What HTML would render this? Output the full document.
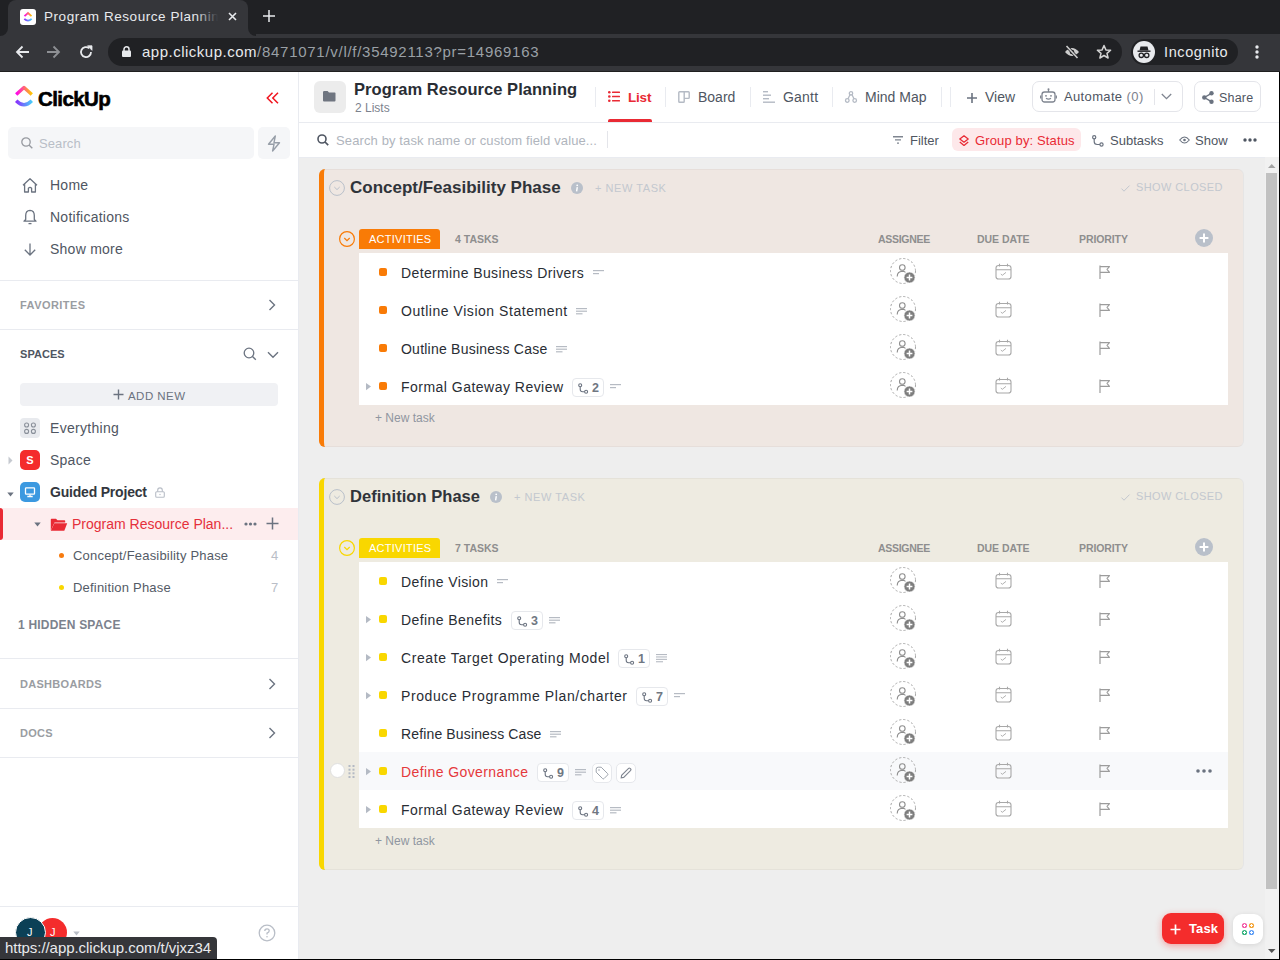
<!DOCTYPE html>
<html><head><meta charset="utf-8">
<style>
*{box-sizing:border-box;margin:0;padding:0}
html,body{width:1280px;height:960px;overflow:hidden;background:#fff;font-family:"Liberation Sans",sans-serif;position:relative}
.a{position:absolute}
.t{position:absolute;white-space:nowrap;line-height:1}
svg{position:absolute;overflow:visible}
/* browser chrome */
#tabbar{left:0;top:0;width:1280px;height:36px;background:#202124}
#tab{left:8px;top:0;width:240px;height:36px;background:#35363a;border-radius:8px 8px 0 0}
#toolbar{left:0;top:36px;width:1280px;height:36px;background:#35363a}
#url{left:108px;top:38px;width:1014px;height:28px;background:#202124;border-radius:14px}
#incog{left:1131px;top:39px;width:107px;height:26px;background:#202124;border-radius:13px}
/* sidebar */
#side{left:0;top:72px;width:299px;height:888px;background:#fff;border-right:1px solid #e9ebf0}
.hr{position:absolute;left:0;width:298px;height:1px;background:#e9ebf0}
.ni{font-size:14px;color:#4f5662;line-height:14px;letter-spacing:0.25px}
.sh{font-size:11px;font-weight:bold;line-height:11px}
.li{font-size:13px;color:#545b66;line-height:13px;letter-spacing:0.2px}
.sep{position:absolute;top:87px;width:1px;height:20px;background:#e9ebf0}
.tb{font-size:14px;color:#4f5662;line-height:14px;margin-top:-1px}
.tl{font-size:13px;color:#4f5662;line-height:13px}
.tn{font-size:14px;line-height:14px}
.colh{font-size:10.5px;font-weight:bold;color:#8e8e8e;line-height:11px}
/* main */
#main{left:299px;top:72px;width:981px;height:888px;background:#eeeeee}
</style></head><body>
<!-- Browser chrome -->
<div class="a" style="left:0;top:0;width:1280px;height:72px;background:#35363a"></div>
<div class="a" style="left:0;top:0;width:1280px;height:34px;background:#202124"></div>
<div class="a" style="left:8px;top:0;width:240px;height:36px;background:#35363a;border-radius:8px 8px 0 0"></div>
<div class="a" style="left:0;top:26px;width:8px;height:10px;background:#35363a"></div>
<div class="a" style="left:0;top:26px;width:8px;height:10px;background:#202124;border-bottom-right-radius:8px"></div>
<div class="a" style="left:248px;top:26px;width:8px;height:10px;background:#35363a"></div>
<div class="a" style="left:248px;top:26px;width:8px;height:10px;background:#202124;border-bottom-left-radius:8px"></div>
<div class="a" style="left:0;top:71px;width:1280px;height:1px;background:#1f1f1f"></div>
<!-- favicon -->
<div class="a" style="left:20px;top:9px;width:16px;height:16px;background:#fff;border-radius:3px"></div>
<svg style="left:20px;top:9px" width="16" height="16" viewBox="0 0 16 16"><defs><linearGradient id="fg1" x1="0" x2="1"><stop offset="0" stop-color="#ff02f0"/><stop offset="1" stop-color="#ffc800"/></linearGradient><linearGradient id="fg2" x1="0" x2="1"><stop offset="0" stop-color="#8930fd"/><stop offset="1" stop-color="#49ccf9"/></linearGradient></defs><path d="M4.5 7.2 L8 4 L11.5 7.2" fill="none" stroke="url(#fg1)" stroke-width="1.8"/><path d="M4.3 9.8 Q8 13.4 11.7 9.8" fill="none" stroke="url(#fg2)" stroke-width="1.8"/></svg>
<div class="t" style="left:44px;top:9px;font-size:13.5px;color:#e8eaed;line-height:16px;letter-spacing:0.55px">Program Resource Planning</div>
<div class="a" style="left:196px;top:4px;width:26px;height:26px;background:linear-gradient(90deg,rgba(53,54,58,0),#35363a 85%)"></div>
<div class="a" style="left:222px;top:4px;width:24px;height:26px;background:#35363a"></div>
<svg style="left:228px;top:12px" width="9" height="9" viewBox="0 0 9 9"><path d="M1 1L8 8M8 1L1 8" stroke="#e8eaed" stroke-width="1.6"/></svg>
<svg style="left:262px;top:9px" width="14" height="14" viewBox="0 0 14 14"><path d="M7 1V13M1 7H13" stroke="#e8eaed" stroke-width="1.5"/></svg>
<!-- nav -->
<svg style="left:15px;top:45px" width="14" height="14" viewBox="0 0 14 14"><path d="M14 7H2M7.5 1.5L2 7L7.5 12.5" fill="none" stroke="#e8eaed" stroke-width="1.8"/></svg>
<svg style="left:47px;top:45px" width="14" height="14" viewBox="0 0 14 14"><path d="M0 7H12M6.5 1.5L12 7L6.5 12.5" fill="none" stroke="#8e9094" stroke-width="1.8"/></svg>
<svg style="left:79px;top:45px" width="14" height="14" viewBox="0 0 14 14"><path d="M12 7A5 5 0 1 1 10.3 3.3" fill="none" stroke="#e8eaed" stroke-width="1.8"/><path d="M8.5 0.8H13V5.3Z" fill="#e8eaed" stroke="#e8eaed" stroke-width="0.8"/></svg>
<div class="a" style="left:108px;top:38px;width:1014px;height:28px;background:#202124;border-radius:14px"></div>
<svg style="left:122px;top:46px" width="9" height="11" viewBox="0 0 9 11"><rect x="0" y="4.5" width="9" height="6.5" rx="1" fill="#e8eaed"/><path d="M2 5V3.3A2.5 2.5 0 0 1 7 3.3V5" fill="none" stroke="#e8eaed" stroke-width="1.5"/></svg>
<div class="t" style="left:142px;top:44px;font-size:15px;color:#e8eaed;line-height:16px;letter-spacing:0.5px">app.clickup.com<span style="color:#9aa0a6;letter-spacing:0.72px">/8471071/v/l/f/35492113?pr=14969163</span></div>
<svg style="left:1064px;top:45px" width="16" height="14" viewBox="0 0 16 14"><path d="M1 7Q8 -1 15 7Q8 15 1 7Z" fill="#cdcdcd"/><circle cx="8" cy="7" r="2.3" fill="#202124"/><path d="M2.5 1L13.5 13" stroke="#202124" stroke-width="3"/><path d="M2.5 1L13.5 13" stroke="#cdcdcd" stroke-width="1.6"/></svg>
<svg style="left:1096px;top:44px" width="16" height="16" viewBox="0 0 16 16"><path d="M8 1.5L9.9 5.9L14.6 6.3L11 9.4L12.1 14L8 11.5L3.9 14L5 9.4L1.4 6.3L6.1 5.9Z" fill="none" stroke="#d4d4d4" stroke-width="1.5" stroke-linejoin="round"/></svg>
<div class="a" style="left:1131px;top:39px;width:107px;height:26px;background:#202124;border-radius:13px"></div>
<div class="a" style="left:1133px;top:41px;width:22px;height:22px;background:#e8eaed;border-radius:50%"></div>
<svg style="left:1133px;top:41px" width="22" height="22" viewBox="0 0 22 22"><path d="M7.5 5.5H14.5L15.5 9.5H6.5Z" fill="#202124"/><rect x="4.5" y="9.5" width="13" height="1.4" fill="#202124"/><circle cx="8.3" cy="14.3" r="2.2" fill="none" stroke="#202124" stroke-width="1.3"/><circle cx="13.7" cy="14.3" r="2.2" fill="none" stroke="#202124" stroke-width="1.3"/><path d="M10.4 14H11.6" stroke="#202124" stroke-width="1.2"/></svg>
<div class="t" style="left:1164px;top:44px;font-size:14.5px;color:#e8eaed;line-height:16px;letter-spacing:0.6px">Incognito</div>
<svg style="left:1255px;top:45px" width="4" height="14" viewBox="0 0 4 14"><circle cx="2" cy="2" r="1.7" fill="#e8eaed"/><circle cx="2" cy="7" r="1.7" fill="#e8eaed"/><circle cx="2" cy="12" r="1.7" fill="#e8eaed"/></svg>

<!-- Sidebar -->
<div class="a" style="left:0;top:72px;width:298px;height:888px;background:#fff"></div>
<div class="a" style="left:298px;top:72px;width:1px;height:888px;background:#e9ebf0"></div>
<!-- logo -->
<svg style="left:15px;top:86px" width="18" height="22" viewBox="0 0 18 22"><defs><linearGradient id="lg1" x1="0" x2="1" y1="0" y2="0"><stop offset="0" stop-color="#ff02f0"/><stop offset="1" stop-color="#ffc800"/></linearGradient><linearGradient id="lg2" x1="0" x2="1"><stop offset="0" stop-color="#8930fd"/><stop offset="1" stop-color="#49ccf9"/></linearGradient></defs><path d="M1.2 8.6L9 1.6L16.8 8.6" fill="none" stroke="url(#lg1)" stroke-width="3.4" stroke-linejoin="round"/><path d="M1.2 14.8Q9 22.6 16.8 14.8" fill="none" stroke="url(#lg2)" stroke-width="3.4"/></svg>
<div class="t" style="left:38px;top:88px;font-size:20.5px;font-weight:bold;color:#000;letter-spacing:-0.6px;line-height:22px;-webkit-text-stroke:0.6px #000">ClickUp</div>
<svg style="left:266px;top:92px" width="13" height="12" viewBox="0 0 13 12"><path d="M6.5 0.8L1.3 6L6.5 11.2M12 0.8L6.8 6L12 11.2" fill="none" stroke="#f0141e" stroke-width="1.5"/></svg>
<!-- search -->
<div class="a" style="left:8px;top:127px;width:246px;height:32px;background:#f5f6f8;border-radius:5px"></div>
<svg style="left:21px;top:137px" width="12" height="12" viewBox="0 0 12 12"><circle cx="5" cy="5" r="4.2" fill="none" stroke="#979aa0" stroke-width="1.3"/><path d="M8 8L11.3 11.3" stroke="#979aa0" stroke-width="1.4"/></svg>
<div class="t" style="left:39px;top:137px;font-size:13px;color:#b9bec7;line-height:13px;letter-spacing:0.1px">Search</div>
<div class="a" style="left:258px;top:127px;width:32px;height:32px;background:#f5f6f8;border-radius:5px"></div>
<svg style="left:267px;top:135px" width="14" height="17" viewBox="0 0 14 17"><path d="M8.3 1L1.5 9.3H7L5.6 16L12.5 7.7H7Z" fill="none" stroke="#979ea8" stroke-width="1.4" stroke-linejoin="round"/></svg>
<!-- nav -->
<svg style="left:22px;top:178px" width="16" height="15" viewBox="0 0 16 15"><path d="M1 7.3L8 0.8L15 7.3M2.6 5.8V14H6.4V10.2Q8 8.6 9.6 10.2V14H13.4V5.8" fill="none" stroke="#6b7380" stroke-width="1.3" stroke-linejoin="round"/></svg>
<div class="t ni" style="left:50px;top:178px">Home</div>
<svg style="left:23px;top:209px" width="14" height="16" viewBox="0 0 14 16"><path d="M7 1.3Q11.3 1.5 11.3 6.5V10.5L13 12.2H1L2.7 10.5V6.5Q2.7 1.5 7 1.3Z" fill="none" stroke="#6b7380" stroke-width="1.3" stroke-linejoin="round"/><path d="M5.5 14.6H8.5" stroke="#6b7380" stroke-width="1.3"/></svg>
<div class="t ni" style="left:50px;top:210px">Notifications</div>
<svg style="left:24px;top:243px" width="12" height="13" viewBox="0 0 12 13"><path d="M6 0.5V12M0.8 6.8L6 12L11.2 6.8" fill="none" stroke="#6b7380" stroke-width="1.3"/></svg>
<div class="t ni" style="left:50px;top:242px">Show more</div>
<div class="hr" style="top:280px"></div>
<div class="t sh" style="left:20px;top:300px;color:#9a9da2;letter-spacing:0.45px">FAVORITES</div>
<svg style="left:268px;top:299px" width="8" height="12" viewBox="0 0 8 12"><path d="M1.5 1L6.5 6L1.5 11" fill="none" stroke="#6b7380" stroke-width="1.4"/></svg>
<div class="hr" style="top:329px"></div>
<div class="t sh" style="left:20px;top:349px;color:#4f5662;letter-spacing:0.05px">SPACES</div>
<svg style="left:243px;top:347px" width="14" height="14" viewBox="0 0 14 14"><circle cx="6" cy="6" r="4.8" fill="none" stroke="#6b7380" stroke-width="1.3"/><path d="M9.5 9.5L12.8 12.8" stroke="#6b7380" stroke-width="1.4"/></svg>
<svg style="left:267px;top:351px" width="12" height="8" viewBox="0 0 12 8"><path d="M1 1.3L6 6.3L11 1.3" fill="none" stroke="#6b7380" stroke-width="1.4"/></svg>
<div class="a" style="left:20px;top:383px;width:258px;height:23px;background:#f0f1f4;border-radius:4px"></div>
<svg style="left:113px;top:389px" width="11" height="11" viewBox="0 0 11 11"><path d="M5.5 0.5V10.5M0.5 5.5H10.5" stroke="#6b7380" stroke-width="1.4"/></svg>
<div class="t" style="left:128px;top:390px;font-size:11.5px;color:#6b7380;line-height:12px;letter-spacing:0.45px">ADD NEW</div>
<!-- everything -->
<div class="a" style="left:20px;top:418px;width:20px;height:20px;background:#e8eaee;border-radius:4px"></div>
<svg style="left:20px;top:418px" width="20" height="20" viewBox="0 0 20 20"><g fill="none" stroke="#8a909a" stroke-width="1.1"><circle cx="6.6" cy="7" r="2"/><circle cx="13.4" cy="7" r="2"/><circle cx="6.6" cy="13.4" r="2"/><circle cx="13.4" cy="13.4" r="2"/></g></svg>
<div class="t ni" style="left:50px;top:421px;letter-spacing:0.3px">Everything</div>
<!-- space -->
<svg style="left:8px;top:456px" width="5" height="9" viewBox="0 0 5 9"><path d="M0.5 0.5L4.5 4.5L0.5 8.5Z" fill="#c5c9d0"/></svg>
<div class="a" style="left:20px;top:450px;width:20px;height:20px;background:#f42c2c;border-radius:5px"></div>
<div class="t" style="left:20px;top:455px;width:20px;text-align:center;font-size:11px;font-weight:bold;color:#fff;line-height:11px">S</div>
<div class="t ni" style="left:50px;top:453px">Space</div>
<!-- guided project -->
<svg style="left:7px;top:492px" width="7" height="5" viewBox="0 0 7 5"><path d="M0.3 0.5H6.7L3.5 4.5Z" fill="#6b7380"/></svg>
<div class="a" style="left:20px;top:482px;width:20px;height:20px;background:#3c99e0;border-radius:5px"></div>
<svg style="left:20px;top:482px" width="20" height="20" viewBox="0 0 20 20"><rect x="5.5" y="5.8" width="9" height="6.4" rx="0.6" fill="none" stroke="#fff" stroke-width="1.3"/><path d="M10 12.4V14.2M7.3 14.5H12.7" stroke="#fff" stroke-width="1.3"/></svg>
<div class="t" style="left:50px;top:485px;font-size:14px;font-weight:bold;color:#33373e;line-height:14px;letter-spacing:-0.2px">Guided Project</div>
<svg style="left:155px;top:487px" width="10" height="11" viewBox="0 0 10 11"><rect x="0.7" y="4.7" width="8.6" height="5.6" rx="1" fill="none" stroke="#b9bec7" stroke-width="1.1"/><path d="M2.7 4.7V3.2A2.3 2.3 0 0 1 7.3 3.2V4.7" fill="none" stroke="#b9bec7" stroke-width="1.1"/><circle cx="5" cy="7.5" r="0.7" fill="#b9bec7"/></svg>
<!-- program resource planning row -->
<div class="a" style="left:0;top:508px;width:298px;height:32px;background:#fdedee"></div>
<div class="a" style="left:-3px;top:508px;width:6px;height:32px;background:#e92a34;border-radius:3px"></div>
<svg style="left:34px;top:522px" width="7" height="5" viewBox="0 0 7 5"><path d="M0.3 0.5H6.7L3.5 4.5Z" fill="#6b7380"/></svg>
<svg style="left:50px;top:518px" width="18" height="14" viewBox="0 0 18 14"><path d="M0.8 1.5Q0.8 0.8 1.5 0.8H6L7.5 2.3H14.5Q15.2 2.3 15.2 3V4.5H4.5L0.8 12.5Z" fill="#e92a34"/><path d="M4.3 5.3H17.2L14.3 12.8H0.8Z" fill="#e92a34"/></svg>
<div class="t" style="left:72px;top:517px;font-size:14px;color:#e5303b;line-height:14px">Program Resource Plan...</div>
<svg style="left:244px;top:522px" width="13" height="4" viewBox="0 0 13 4"><circle cx="2" cy="2" r="1.6" fill="#6b7380"/><circle cx="6.5" cy="2" r="1.6" fill="#6b7380"/><circle cx="11" cy="2" r="1.6" fill="#6b7380"/></svg>
<svg style="left:266px;top:517px" width="13" height="13" viewBox="0 0 13 13"><path d="M6.5 0.5V12.5M0.5 6.5H12.5" stroke="#6b7380" stroke-width="1.5"/></svg>
<!-- lists -->
<div class="a" style="left:59px;top:553px;width:5px;height:5px;background:#f77b0f;border-radius:50%"></div>
<div class="t li" style="left:73px;top:549px">Concept/Feasibility Phase</div>
<div class="t li" style="left:271px;top:549px;color:#b9bec7">4</div>
<div class="a" style="left:59px;top:585px;width:5px;height:5px;background:#f9d700;border-radius:50%"></div>
<div class="t li" style="left:73px;top:581px">Definition Phase</div>
<div class="t li" style="left:271px;top:581px;color:#b9bec7">7</div>
<div class="t" style="left:18px;top:619px;font-size:12px;font-weight:bold;color:#7c828d;line-height:12px;letter-spacing:0.2px">1 HIDDEN SPACE</div>
<div class="hr" style="top:658px"></div>
<div class="t sh" style="left:20px;top:679px;color:#9a9da2;letter-spacing:0.3px">DASHBOARDS</div>
<svg style="left:268px;top:678px" width="8" height="12" viewBox="0 0 8 12"><path d="M1.5 1L6.5 6L1.5 11" fill="none" stroke="#6b7380" stroke-width="1.4"/></svg>
<div class="hr" style="top:708px"></div>
<div class="t sh" style="left:20px;top:728px;color:#9a9da2;letter-spacing:0.3px">DOCS</div>
<svg style="left:268px;top:727px" width="8" height="12" viewBox="0 0 8 12"><path d="M1.5 1L6.5 6L1.5 11" fill="none" stroke="#6b7380" stroke-width="1.4"/></svg>
<div class="hr" style="top:757px"></div>
<div class="hr" style="top:906px"></div>
<!-- footer -->
<div class="a" style="left:38px;top:918px;width:29px;height:29px;background:#f42c2c;border-radius:50%"></div>
<div class="t" style="left:50px;top:927px;font-size:11px;color:#fff;line-height:11px">J</div>
<div class="a" style="left:15px;top:917px;width:31px;height:31px;background:#0b4056;border-radius:50%;border:1.5px solid #fff"></div>
<div class="t" style="left:27px;top:927px;font-size:11px;color:#fff;line-height:11px">J</div>
<svg style="left:73px;top:931px" width="7" height="5" viewBox="0 0 7 5"><path d="M0.3 0.5H6.7L3.5 4.5Z" fill="#b9bec7"/></svg>
<svg style="left:258px;top:924px" width="18" height="18" viewBox="0 0 18 18"><circle cx="9" cy="9" r="7.8" fill="none" stroke="#b9bec7" stroke-width="1.3"/><path d="M6.8 7Q6.8 4.8 9 4.8Q11.2 4.8 11.2 6.8Q11.2 8.2 9 9.2V10.6" fill="none" stroke="#b9bec7" stroke-width="1.3"/><circle cx="9" cy="12.8" r="0.8" fill="#b9bec7"/></svg>
<!-- status tooltip -->
<div class="a" style="left:0;top:937px;width:217px;height:23px;background:#35363a;border-top-right-radius:4px"></div>
<div class="t" style="left:5px;top:940px;font-size:15px;color:#e8eaed;line-height:16px;letter-spacing:-0.05px">https://app.clickup.com/t/vjxz34</div>

<!-- Main -->
<div class="a" style="left:299px;top:72px;width:981px;height:888px;background:#eeeeee"></div>
<div class="a" style="left:299px;top:72px;width:980px;height:85px;background:#fff"></div>
<div class="a" style="left:299px;top:122px;width:980px;height:1px;background:#e9ebf0"></div>
<div class="a" style="left:299px;top:157px;width:980px;height:1px;background:#e9ebf0"></div>
<!-- header -->
<div class="a" style="left:314px;top:81px;width:32px;height:32px;background:#ececec;border-radius:6px"></div>
<svg style="left:323px;top:91px" width="13" height="11" viewBox="0 0 13 11"><path d="M0 1.2Q0 0 1.2 0H4.6L6 1.4H11.8Q12.5 1.4 12.5 2.2V9.6Q12.5 10.5 11.6 10.5H1Q0 10.5 0 9.5Z" fill="#6f7580"/></svg>
<div class="t" style="left:354px;top:81px;font-size:16.5px;font-weight:bold;color:#292d34;line-height:17px;letter-spacing:0.05px">Program Resource Planning</div>
<div class="t" style="left:355px;top:102px;font-size:12px;color:#7c828d;line-height:12px">2 Lists</div>
<div class="a sep" style="left:595px"></div>
<svg style="left:608px;top:91px" width="12" height="11" viewBox="0 0 12 11"><g fill="#e92a34"><circle cx="1.3" cy="1.3" r="1.3"/><circle cx="1.3" cy="5.5" r="1.3"/><circle cx="1.3" cy="9.7" r="1.3"/><rect x="4" y="0.6" width="8" height="1.4" rx="0.5"/><rect x="4" y="4.8" width="8" height="1.4" rx="0.5"/><rect x="4" y="9" width="8" height="1.4" rx="0.5"/></g></svg>
<div class="t" style="left:628px;top:91px;font-size:13.5px;font-weight:bold;color:#e92a34;line-height:13px;letter-spacing:-0.2px">List</div>
<div class="a" style="left:608px;top:119px;width:44px;height:3px;background:#e92a34;border-radius:2px 2px 0 0"></div>
<div class="a sep" style="left:665px"></div>
<svg style="left:678px;top:91px" width="12" height="12" viewBox="0 0 12 12"><path d="M1.6 0.8H10.4Q11.2 0.8 11.2 1.6V6.6Q11.2 7.4 10.4 7.4H6.2V10.4Q6.2 11.2 5.4 11.2H1.6Q0.8 11.2 0.8 10.4V1.6Q0.8 0.8 1.6 0.8ZM6.2 0.8V7.4" fill="none" stroke="#b4bac4" stroke-width="1.4"/></svg>
<div class="t tb" style="left:698px;top:91px">Board</div>
<div class="a sep" style="left:750px"></div>
<svg style="left:763px;top:91px" width="12" height="12" viewBox="0 0 12 12"><g fill="#b4bac4"><rect x="0" y="0" width="5" height="1.4"/><rect x="0" y="3.5" width="8" height="1.4"/><rect x="0" y="7" width="6" height="1.4"/><rect x="0" y="10.5" width="12" height="1.4"/></g></svg>
<div class="t tb" style="left:783px;top:91px;letter-spacing:0.2px">Gantt</div>
<div class="a sep" style="left:832px"></div>
<svg style="left:845px;top:91px" width="12" height="12" viewBox="0 0 12 12"><g fill="none" stroke="#b4bac4" stroke-width="1.3"><circle cx="6" cy="2.3" r="1.7"/><circle cx="2.3" cy="9.5" r="1.8"/><circle cx="9.7" cy="9.5" r="1.8"/><path d="M5 3.8L3 7.8M7 3.8L9 7.8"/></g></svg>
<div class="t tb" style="left:865px;top:91px">Mind Map</div>
<div class="a sep" style="left:941px"></div>
<div class="a sep" style="left:950px"></div>
<svg style="left:967px;top:93px" width="10" height="10" viewBox="0 0 10 10"><path d="M5 0V10M0 5H10" stroke="#6b7380" stroke-width="1.6"/></svg>
<div class="t tb" style="left:985px;top:91px">View</div>
<!-- automate -->
<div class="a" style="left:1032px;top:81px;width:151px;height:31px;border:1px solid #e4e5ea;border-radius:7px"></div>
<svg style="left:1040px;top:88px" width="17" height="15" viewBox="0 0 17 15"><g fill="none" stroke="#7f8590" stroke-width="1.3"><rect x="2" y="4" width="13" height="10" rx="2.5"/><path d="M8.5 4V1.8M0.7 7.5V10.5M16.3 7.5V10.5"/><path d="M6 10.3Q8.5 12 11 10.3"/></g><circle cx="8.5" cy="1.3" r="1" fill="#7f8590"/><circle cx="6" cy="7.8" r="0.9" fill="#7f8590"/><circle cx="11" cy="7.8" r="0.9" fill="#7f8590"/></svg>
<div class="t" style="left:1064px;top:90px;font-size:13px;color:#4f5662;line-height:13px;letter-spacing:0.35px">Automate <span style="color:#7c828d;letter-spacing:0.5px">(0)</span></div>
<div class="a" style="left:1154px;top:89px;width:1px;height:16px;background:#e4e5ea"></div>
<svg style="left:1161px;top:93px" width="11" height="7" viewBox="0 0 11 7"><path d="M0.8 1L5.5 5.7L10.2 1" fill="none" stroke="#7f8590" stroke-width="1.3"/></svg>
<div class="a" style="left:1194px;top:81px;width:67px;height:31px;border:1px solid #e4e5ea;border-radius:7px"></div>
<svg style="left:1202px;top:91px" width="12" height="13" viewBox="0 0 12 13"><g fill="#6b7380"><circle cx="9.5" cy="2.3" r="2.2"/><circle cx="2.3" cy="6.5" r="2.2"/><circle cx="9.5" cy="10.7" r="2.2"/></g><path d="M9.5 2.3L2.3 6.5L9.5 10.7" fill="none" stroke="#6b7380" stroke-width="1.4"/></svg>
<div class="t" style="left:1219px;top:92px;font-size:12.5px;color:#4f5662;line-height:13px;letter-spacing:0.2px">Share</div>
<!-- toolbar -->
<svg style="left:317px;top:134px" width="12" height="12" viewBox="0 0 12 12"><circle cx="5" cy="5" r="4" fill="none" stroke="#4f5662" stroke-width="1.6"/><path d="M8 8L11.2 11.2" stroke="#4f5662" stroke-width="1.7"/></svg>
<div class="t" style="left:336px;top:134px;font-size:13px;color:#b0b5bd;line-height:13px;letter-spacing:0.12px">Search by task name or custom field value...</div>
<div class="a" style="left:607px;top:131px;width:1px;height:17px;background:#e4e5ea"></div>
<svg style="left:893px;top:136px" width="10" height="8" viewBox="0 0 10 8"><path d="M0 0.7H10M2 3.9H8M4 7.1H6" stroke="#7f8590" stroke-width="1.4"/></svg>
<div class="t tl" style="left:910px;top:134px">Filter</div>
<div class="a" style="left:952px;top:128px;width:129px;height:23px;background:#fde8ea;border-radius:6px"></div>
<svg style="left:959px;top:135px" width="10" height="12" viewBox="0 0 10 12"><g fill="none" stroke="#e92a34" stroke-width="1.3" stroke-linejoin="round"><path d="M5 0.8L9.2 4L5 7.2L0.8 4Z"/><path d="M0.8 7L5 10.4L9.2 7"/></g></svg>
<div class="t tl" style="left:975px;top:134px;color:#e92a34;letter-spacing:0.13px">Group by: Status</div>
<svg style="left:1092px;top:135px" width="12" height="12" viewBox="0 0 12 12"><g fill="none" stroke="#6b7380" stroke-width="1.2"><circle cx="2.2" cy="2.2" r="1.6"/><circle cx="9.5" cy="9.5" r="1.6"/><path d="M2.2 3.8V6.5Q2.2 9.5 5.2 9.5H7.9"/></g></svg>
<div class="t tl" style="left:1110px;top:134px">Subtasks</div>
<svg style="left:1179px;top:136px" width="11" height="8" viewBox="0 0 11 8"><path d="M0.7 4Q5.5 -2 10.3 4Q5.5 10 0.7 4Z" fill="none" stroke="#6b7380" stroke-width="1.1"/><circle cx="5.5" cy="4" r="1.3" fill="#6b7380"/></svg>
<div class="t tl" style="left:1195px;top:134px">Show</div>
<svg style="left:1243px;top:138px" width="14" height="4" viewBox="0 0 14 4"><circle cx="2" cy="2" r="1.7" fill="#4f5662"/><circle cx="7" cy="2" r="1.7" fill="#4f5662"/><circle cx="12" cy="2" r="1.7" fill="#4f5662"/></svg>
<!-- scrollbar -->
<div class="a" style="left:1265px;top:157px;width:14px;height:803px;background:#f1f1f1"></div>
<svg style="left:1267px;top:163px" width="10" height="6" viewBox="0 0 10 6"><path d="M1 5H8.5L4.75 1Z" fill="#a3a3a3"/></svg>
<div class="a" style="left:1266px;top:173px;width:11px;height:716px;background:#c1c1c1"></div>
<svg style="left:1267px;top:948px" width="10" height="6" viewBox="0 0 10 6"><path d="M1 1H8.5L4.75 5Z" fill="#505050"/></svg>

<!-- CONTENT -->
<div class="a" style="left:319px;top:169px;width:924px;height:278px;background:#efe7e2;border-radius:6px;border-left:5px solid #f97b06"></div>
<div class="a" style="left:322px;top:169px;width:922px;height:278px;border:1px solid rgba(0,0,0,0.035);border-left:none;border-radius:0 6px 6px 0"></div>
<svg style="left:329px;top:180px" width="16" height="16" viewBox="0 0 16 16"><circle cx="8" cy="8" r="7.4" fill="none" stroke="#b9c0ca" stroke-width="1.0"/><path d="M5.3 7L8 9.6L10.7 7" fill="none" stroke="#b9c0ca" stroke-width="1.0"/></svg>
<div class="t" style="left:350px;top:179px;font-size:17px;font-weight:bold;color:#30343a;line-height:17px;letter-spacing:0px">Concept/Feasibility Phase</div>
<svg style="left:571px;top:182px" width="12" height="12" viewBox="0 0 12 12"><circle cx="6" cy="6" r="6" fill="#b9c0ca"/><circle cx="6.2" cy="3.3" r="0.9" fill="#fff"/><path d="M6.3 5.2L5.6 9.3" stroke="#fff" stroke-width="1.4"/></svg>
<div class="t" style="left:595px;top:183px;font-size:11px;color:#c3c8cf;line-height:11px;letter-spacing:0.55px">+ NEW TASK</div>
<svg style="left:1121px;top:185px" width="9" height="7" viewBox="0 0 9 7"><path d="M0.5 3.6L3 6.2L8.5 0.6" fill="none" stroke="#c3c8cf" stroke-width="1"/></svg>
<div class="t" style="left:1136px;top:182px;font-size:11px;color:#c3c8cf;line-height:11px;letter-spacing:0.4px">SHOW CLOSED</div>
<svg style="left:339px;top:231px" width="16" height="16" viewBox="0 0 16 16"><circle cx="8" cy="8" r="7.4" fill="none" stroke="#f97b06" stroke-width="1.2"/><path d="M5.3 7L8 9.6L10.7 7" fill="none" stroke="#f97b06" stroke-width="1.2"/></svg>
<div class="a" style="left:359px;top:229px;width:81px;height:20px;background:#f97b06;border-radius:3px 3px 0 0"></div>
<div class="t" style="left:369px;top:234px;font-size:11px;color:#fff;line-height:11px;letter-spacing:0.25px">ACTIVITIES</div>
<div class="t colh" style="left:455px;top:234px">4 TASKS</div>
<div class="t colh" style="left:878px;top:234px;letter-spacing:-0.3px">ASSIGNEE</div>
<div class="t colh" style="left:977px;top:234px;letter-spacing:-0.05px">DUE DATE</div>
<div class="t colh" style="left:1079px;top:234px;letter-spacing:-0.1px">PRIORITY</div>
<svg style="left:1195px;top:229px" width="18" height="18" viewBox="0 0 18 18"><circle cx="9" cy="9" r="9" fill="#b9c0ca"/><path d="M9 4.6V13.4M4.6 9H13.4" stroke="#fff" stroke-width="2"/></svg>
<div class="a" style="left:359px;top:253px;width:869px;height:152px;background:#fff"></div>
<div class="a" style="left:379px;top:268px;width:8px;height:8px;background:#f97b06;border-radius:2px"></div>
<div class="t tn" style="left:401px;top:266px;letter-spacing:0.37px;color:#292d34">Determine Business Drivers</div>
<svg style="left:593px;top:270px" width="11" height="5" viewBox="0 0 11 5"><g fill="#b6bbc3"><rect x="0" y="0" width="11" height="1.2"/><rect x="0" y="3" width="6" height="1.2"/></g></svg>
<svg style="left:890px;top:258px" width="27" height="27" viewBox="0 0 27 27"><circle cx="13" cy="13" r="12.5" fill="none" stroke="#a9a9a9" stroke-width="1" stroke-dasharray="2.2 2"/><circle cx="12.3" cy="9.5" r="2.8" fill="none" stroke="#8e8e8e" stroke-width="1.1"/><path d="M7.2 18.5Q7.3 13.6 12.3 13.3Q14.3 13.3 15.5 14.3" fill="none" stroke="#8e8e8e" stroke-width="1.1"/><circle cx="19.5" cy="19.5" r="5.6" fill="#7e7e7e" stroke="#fff" stroke-width="0.8"/><path d="M19.5 16.6V22.4M16.6 19.5H22.4" stroke="#fff" stroke-width="1.5"/></svg>
<svg style="left:995px;top:263px" width="17" height="17" viewBox="0 0 17 17"><rect x="1" y="2.5" width="15" height="13.5" rx="2.6" fill="none" stroke="#a8a8a8" stroke-width="1.1"/><path d="M1 6.8H16M4.5 0.8V3.6M12.5 0.8V3.6" stroke="#a8a8a8" stroke-width="1.1"/><path d="M5.8 11L7.3 12.3L11 9.4" fill="none" stroke="#a8a8a8" stroke-width="0.9"/></svg>
<svg style="left:1099px;top:265px" width="12" height="15" viewBox="0 0 12 15"><path d="M1 0.5V14" stroke="#9c9c9c" stroke-width="1.2"/><path d="M1 1.6H10.5L8 4.3L10.5 7.4H1" fill="none" stroke="#9c9c9c" stroke-width="1.1" stroke-linejoin="round"/></svg>
<div class="a" style="left:379px;top:306px;width:8px;height:8px;background:#f97b06;border-radius:2px"></div>
<div class="t tn" style="left:401px;top:304px;letter-spacing:0.54px;color:#292d34">Outline Vision Statement</div>
<svg style="left:576px;top:308px" width="11" height="7" viewBox="0 0 11 7"><g fill="#b6bbc3"><rect x="0" y="0" width="11" height="1.2"/><rect x="0" y="2.6" width="11" height="1.2"/><rect x="0" y="5.2" width="6.5" height="1.2"/></g></svg>
<svg style="left:890px;top:296px" width="27" height="27" viewBox="0 0 27 27"><circle cx="13" cy="13" r="12.5" fill="none" stroke="#a9a9a9" stroke-width="1" stroke-dasharray="2.2 2"/><circle cx="12.3" cy="9.5" r="2.8" fill="none" stroke="#8e8e8e" stroke-width="1.1"/><path d="M7.2 18.5Q7.3 13.6 12.3 13.3Q14.3 13.3 15.5 14.3" fill="none" stroke="#8e8e8e" stroke-width="1.1"/><circle cx="19.5" cy="19.5" r="5.6" fill="#7e7e7e" stroke="#fff" stroke-width="0.8"/><path d="M19.5 16.6V22.4M16.6 19.5H22.4" stroke="#fff" stroke-width="1.5"/></svg>
<svg style="left:995px;top:301px" width="17" height="17" viewBox="0 0 17 17"><rect x="1" y="2.5" width="15" height="13.5" rx="2.6" fill="none" stroke="#a8a8a8" stroke-width="1.1"/><path d="M1 6.8H16M4.5 0.8V3.6M12.5 0.8V3.6" stroke="#a8a8a8" stroke-width="1.1"/><path d="M5.8 11L7.3 12.3L11 9.4" fill="none" stroke="#a8a8a8" stroke-width="0.9"/></svg>
<svg style="left:1099px;top:303px" width="12" height="15" viewBox="0 0 12 15"><path d="M1 0.5V14" stroke="#9c9c9c" stroke-width="1.2"/><path d="M1 1.6H10.5L8 4.3L10.5 7.4H1" fill="none" stroke="#9c9c9c" stroke-width="1.1" stroke-linejoin="round"/></svg>
<div class="a" style="left:379px;top:344px;width:8px;height:8px;background:#f97b06;border-radius:2px"></div>
<div class="t tn" style="left:401px;top:342px;letter-spacing:0.23px;color:#292d34">Outline Business Case</div>
<svg style="left:556px;top:346px" width="11" height="7" viewBox="0 0 11 7"><g fill="#b6bbc3"><rect x="0" y="0" width="11" height="1.2"/><rect x="0" y="2.6" width="11" height="1.2"/><rect x="0" y="5.2" width="6.5" height="1.2"/></g></svg>
<svg style="left:890px;top:334px" width="27" height="27" viewBox="0 0 27 27"><circle cx="13" cy="13" r="12.5" fill="none" stroke="#a9a9a9" stroke-width="1" stroke-dasharray="2.2 2"/><circle cx="12.3" cy="9.5" r="2.8" fill="none" stroke="#8e8e8e" stroke-width="1.1"/><path d="M7.2 18.5Q7.3 13.6 12.3 13.3Q14.3 13.3 15.5 14.3" fill="none" stroke="#8e8e8e" stroke-width="1.1"/><circle cx="19.5" cy="19.5" r="5.6" fill="#7e7e7e" stroke="#fff" stroke-width="0.8"/><path d="M19.5 16.6V22.4M16.6 19.5H22.4" stroke="#fff" stroke-width="1.5"/></svg>
<svg style="left:995px;top:339px" width="17" height="17" viewBox="0 0 17 17"><rect x="1" y="2.5" width="15" height="13.5" rx="2.6" fill="none" stroke="#a8a8a8" stroke-width="1.1"/><path d="M1 6.8H16M4.5 0.8V3.6M12.5 0.8V3.6" stroke="#a8a8a8" stroke-width="1.1"/><path d="M5.8 11L7.3 12.3L11 9.4" fill="none" stroke="#a8a8a8" stroke-width="0.9"/></svg>
<svg style="left:1099px;top:341px" width="12" height="15" viewBox="0 0 12 15"><path d="M1 0.5V14" stroke="#9c9c9c" stroke-width="1.2"/><path d="M1 1.6H10.5L8 4.3L10.5 7.4H1" fill="none" stroke="#9c9c9c" stroke-width="1.1" stroke-linejoin="round"/></svg>
<svg style="left:366px;top:383px" width="5" height="8" viewBox="0 0 5 8"><path d="M0 0L5 3.6L0 7.2Z" fill="#b4bac4"/></svg>
<div class="a" style="left:379px;top:382px;width:8px;height:8px;background:#f97b06;border-radius:2px"></div>
<div class="t tn" style="left:401px;top:380px;letter-spacing:0.48px;color:#292d34">Formal Gateway Review</div>
<div class="a" style="left:572px;top:378px;width:32px;height:19px;background:#fff;border:1px solid #e6e8ec;border-radius:4px"></div>
<svg style="left:578px;top:383px" width="10" height="11" viewBox="0 0 10 11"><path d="M2.2 3.6V6.3Q2.2 8.7 4.6 8.7H6.6" fill="none" stroke="#6b7380" stroke-width="1.1"/><circle cx="2.2" cy="2.2" r="1.5" fill="none" stroke="#6b7380" stroke-width="1.1"/><circle cx="8.1" cy="8.7" r="1.5" fill="none" stroke="#6b7380" stroke-width="1.1"/></svg>
<div class="t" style="left:592px;top:382px;font-size:12.5px;font-weight:bold;color:#707782;line-height:12px">2</div>
<svg style="left:610px;top:384px" width="11" height="5" viewBox="0 0 11 5"><g fill="#b6bbc3"><rect x="0" y="0" width="11" height="1.2"/><rect x="0" y="3" width="6" height="1.2"/></g></svg>
<svg style="left:890px;top:372px" width="27" height="27" viewBox="0 0 27 27"><circle cx="13" cy="13" r="12.5" fill="none" stroke="#a9a9a9" stroke-width="1" stroke-dasharray="2.2 2"/><circle cx="12.3" cy="9.5" r="2.8" fill="none" stroke="#8e8e8e" stroke-width="1.1"/><path d="M7.2 18.5Q7.3 13.6 12.3 13.3Q14.3 13.3 15.5 14.3" fill="none" stroke="#8e8e8e" stroke-width="1.1"/><circle cx="19.5" cy="19.5" r="5.6" fill="#7e7e7e" stroke="#fff" stroke-width="0.8"/><path d="M19.5 16.6V22.4M16.6 19.5H22.4" stroke="#fff" stroke-width="1.5"/></svg>
<svg style="left:995px;top:377px" width="17" height="17" viewBox="0 0 17 17"><rect x="1" y="2.5" width="15" height="13.5" rx="2.6" fill="none" stroke="#a8a8a8" stroke-width="1.1"/><path d="M1 6.8H16M4.5 0.8V3.6M12.5 0.8V3.6" stroke="#a8a8a8" stroke-width="1.1"/><path d="M5.8 11L7.3 12.3L11 9.4" fill="none" stroke="#a8a8a8" stroke-width="0.9"/></svg>
<svg style="left:1099px;top:379px" width="12" height="15" viewBox="0 0 12 15"><path d="M1 0.5V14" stroke="#9c9c9c" stroke-width="1.2"/><path d="M1 1.6H10.5L8 4.3L10.5 7.4H1" fill="none" stroke="#9c9c9c" stroke-width="1.1" stroke-linejoin="round"/></svg>
<div class="t" style="left:375px;top:412px;font-size:12px;color:#8f96a0;line-height:12px">+ New task</div>
<div class="a" style="left:319px;top:478px;width:924px;height:392px;background:#eeebe1;border-radius:6px;border-left:5px solid #f9d700"></div>
<div class="a" style="left:322px;top:478px;width:922px;height:392px;border:1px solid rgba(0,0,0,0.035);border-left:none;border-radius:0 6px 6px 0"></div>
<svg style="left:329px;top:489px" width="16" height="16" viewBox="0 0 16 16"><circle cx="8" cy="8" r="7.4" fill="none" stroke="#b9c0ca" stroke-width="1.0"/><path d="M5.3 7L8 9.6L10.7 7" fill="none" stroke="#b9c0ca" stroke-width="1.0"/></svg>
<div class="t" style="left:350px;top:488px;font-size:16.5px;font-weight:bold;color:#30343a;line-height:17px;letter-spacing:0.05px">Definition Phase</div>
<svg style="left:490px;top:491px" width="12" height="12" viewBox="0 0 12 12"><circle cx="6" cy="6" r="6" fill="#b9c0ca"/><circle cx="6.2" cy="3.3" r="0.9" fill="#fff"/><path d="M6.3 5.2L5.6 9.3" stroke="#fff" stroke-width="1.4"/></svg>
<div class="t" style="left:514px;top:492px;font-size:11px;color:#c3c8cf;line-height:11px;letter-spacing:0.55px">+ NEW TASK</div>
<svg style="left:1121px;top:494px" width="9" height="7" viewBox="0 0 9 7"><path d="M0.5 3.6L3 6.2L8.5 0.6" fill="none" stroke="#c3c8cf" stroke-width="1"/></svg>
<div class="t" style="left:1136px;top:491px;font-size:11px;color:#c3c8cf;line-height:11px;letter-spacing:0.4px">SHOW CLOSED</div>
<svg style="left:339px;top:540px" width="16" height="16" viewBox="0 0 16 16"><circle cx="8" cy="8" r="7.4" fill="none" stroke="#f9d700" stroke-width="1.2"/><path d="M5.3 7L8 9.6L10.7 7" fill="none" stroke="#f9d700" stroke-width="1.2"/></svg>
<div class="a" style="left:359px;top:538px;width:81px;height:20px;background:#f9d700;border-radius:3px 3px 0 0"></div>
<div class="t" style="left:369px;top:543px;font-size:11px;color:#fff;line-height:11px;letter-spacing:0.25px">ACTIVITIES</div>
<div class="t colh" style="left:455px;top:543px">7 TASKS</div>
<div class="t colh" style="left:878px;top:543px;letter-spacing:-0.3px">ASSIGNEE</div>
<div class="t colh" style="left:977px;top:543px;letter-spacing:-0.05px">DUE DATE</div>
<div class="t colh" style="left:1079px;top:543px;letter-spacing:-0.1px">PRIORITY</div>
<svg style="left:1195px;top:538px" width="18" height="18" viewBox="0 0 18 18"><circle cx="9" cy="9" r="9" fill="#b9c0ca"/><path d="M9 4.6V13.4M4.6 9H13.4" stroke="#fff" stroke-width="2"/></svg>
<div class="a" style="left:359px;top:562px;width:869px;height:266px;background:#fff"></div>
<div class="a" style="left:379px;top:577px;width:8px;height:8px;background:#f9d700;border-radius:2px"></div>
<div class="t tn" style="left:401px;top:575px;letter-spacing:0.4px;color:#292d34">Define Vision</div>
<svg style="left:497px;top:579px" width="11" height="5" viewBox="0 0 11 5"><g fill="#b6bbc3"><rect x="0" y="0" width="11" height="1.2"/><rect x="0" y="3" width="6" height="1.2"/></g></svg>
<svg style="left:890px;top:567px" width="27" height="27" viewBox="0 0 27 27"><circle cx="13" cy="13" r="12.5" fill="none" stroke="#a9a9a9" stroke-width="1" stroke-dasharray="2.2 2"/><circle cx="12.3" cy="9.5" r="2.8" fill="none" stroke="#8e8e8e" stroke-width="1.1"/><path d="M7.2 18.5Q7.3 13.6 12.3 13.3Q14.3 13.3 15.5 14.3" fill="none" stroke="#8e8e8e" stroke-width="1.1"/><circle cx="19.5" cy="19.5" r="5.6" fill="#7e7e7e" stroke="#fff" stroke-width="0.8"/><path d="M19.5 16.6V22.4M16.6 19.5H22.4" stroke="#fff" stroke-width="1.5"/></svg>
<svg style="left:995px;top:572px" width="17" height="17" viewBox="0 0 17 17"><rect x="1" y="2.5" width="15" height="13.5" rx="2.6" fill="none" stroke="#a8a8a8" stroke-width="1.1"/><path d="M1 6.8H16M4.5 0.8V3.6M12.5 0.8V3.6" stroke="#a8a8a8" stroke-width="1.1"/><path d="M5.8 11L7.3 12.3L11 9.4" fill="none" stroke="#a8a8a8" stroke-width="0.9"/></svg>
<svg style="left:1099px;top:574px" width="12" height="15" viewBox="0 0 12 15"><path d="M1 0.5V14" stroke="#9c9c9c" stroke-width="1.2"/><path d="M1 1.6H10.5L8 4.3L10.5 7.4H1" fill="none" stroke="#9c9c9c" stroke-width="1.1" stroke-linejoin="round"/></svg>
<svg style="left:366px;top:616px" width="5" height="8" viewBox="0 0 5 8"><path d="M0 0L5 3.6L0 7.2Z" fill="#b4bac4"/></svg>
<div class="a" style="left:379px;top:615px;width:8px;height:8px;background:#f9d700;border-radius:2px"></div>
<div class="t tn" style="left:401px;top:613px;letter-spacing:0.42px;color:#292d34">Define Benefits</div>
<div class="a" style="left:511px;top:611px;width:32px;height:19px;background:#fff;border:1px solid #e6e8ec;border-radius:4px"></div>
<svg style="left:517px;top:616px" width="10" height="11" viewBox="0 0 10 11"><path d="M2.2 3.6V6.3Q2.2 8.7 4.6 8.7H6.6" fill="none" stroke="#6b7380" stroke-width="1.1"/><circle cx="2.2" cy="2.2" r="1.5" fill="none" stroke="#6b7380" stroke-width="1.1"/><circle cx="8.1" cy="8.7" r="1.5" fill="none" stroke="#6b7380" stroke-width="1.1"/></svg>
<div class="t" style="left:531px;top:615px;font-size:12.5px;font-weight:bold;color:#707782;line-height:12px">3</div>
<svg style="left:549px;top:617px" width="11" height="7" viewBox="0 0 11 7"><g fill="#b6bbc3"><rect x="0" y="0" width="11" height="1.2"/><rect x="0" y="2.6" width="11" height="1.2"/><rect x="0" y="5.2" width="6.5" height="1.2"/></g></svg>
<svg style="left:890px;top:605px" width="27" height="27" viewBox="0 0 27 27"><circle cx="13" cy="13" r="12.5" fill="none" stroke="#a9a9a9" stroke-width="1" stroke-dasharray="2.2 2"/><circle cx="12.3" cy="9.5" r="2.8" fill="none" stroke="#8e8e8e" stroke-width="1.1"/><path d="M7.2 18.5Q7.3 13.6 12.3 13.3Q14.3 13.3 15.5 14.3" fill="none" stroke="#8e8e8e" stroke-width="1.1"/><circle cx="19.5" cy="19.5" r="5.6" fill="#7e7e7e" stroke="#fff" stroke-width="0.8"/><path d="M19.5 16.6V22.4M16.6 19.5H22.4" stroke="#fff" stroke-width="1.5"/></svg>
<svg style="left:995px;top:610px" width="17" height="17" viewBox="0 0 17 17"><rect x="1" y="2.5" width="15" height="13.5" rx="2.6" fill="none" stroke="#a8a8a8" stroke-width="1.1"/><path d="M1 6.8H16M4.5 0.8V3.6M12.5 0.8V3.6" stroke="#a8a8a8" stroke-width="1.1"/><path d="M5.8 11L7.3 12.3L11 9.4" fill="none" stroke="#a8a8a8" stroke-width="0.9"/></svg>
<svg style="left:1099px;top:612px" width="12" height="15" viewBox="0 0 12 15"><path d="M1 0.5V14" stroke="#9c9c9c" stroke-width="1.2"/><path d="M1 1.6H10.5L8 4.3L10.5 7.4H1" fill="none" stroke="#9c9c9c" stroke-width="1.1" stroke-linejoin="round"/></svg>
<svg style="left:366px;top:654px" width="5" height="8" viewBox="0 0 5 8"><path d="M0 0L5 3.6L0 7.2Z" fill="#b4bac4"/></svg>
<div class="a" style="left:379px;top:653px;width:8px;height:8px;background:#f9d700;border-radius:2px"></div>
<div class="t tn" style="left:401px;top:651px;letter-spacing:0.59px;color:#292d34">Create Target Operating Model</div>
<div class="a" style="left:618px;top:649px;width:32px;height:19px;background:#fff;border:1px solid #e6e8ec;border-radius:4px"></div>
<svg style="left:624px;top:654px" width="10" height="11" viewBox="0 0 10 11"><path d="M2.2 3.6V6.3Q2.2 8.7 4.6 8.7H6.6" fill="none" stroke="#6b7380" stroke-width="1.1"/><circle cx="2.2" cy="2.2" r="1.5" fill="none" stroke="#6b7380" stroke-width="1.1"/><circle cx="8.1" cy="8.7" r="1.5" fill="none" stroke="#6b7380" stroke-width="1.1"/></svg>
<div class="t" style="left:638px;top:653px;font-size:12.5px;font-weight:bold;color:#707782;line-height:12px">1</div>
<svg style="left:656px;top:654px" width="11" height="9" viewBox="0 0 11 9"><g fill="#b6bbc3"><rect x="0" y="0" width="11" height="1.1"/><rect x="0" y="2.4" width="11" height="1.1"/><rect x="0" y="4.8" width="11" height="1.1"/><rect x="0" y="7.2" width="7" height="1.1"/></g></svg>
<svg style="left:890px;top:643px" width="27" height="27" viewBox="0 0 27 27"><circle cx="13" cy="13" r="12.5" fill="none" stroke="#a9a9a9" stroke-width="1" stroke-dasharray="2.2 2"/><circle cx="12.3" cy="9.5" r="2.8" fill="none" stroke="#8e8e8e" stroke-width="1.1"/><path d="M7.2 18.5Q7.3 13.6 12.3 13.3Q14.3 13.3 15.5 14.3" fill="none" stroke="#8e8e8e" stroke-width="1.1"/><circle cx="19.5" cy="19.5" r="5.6" fill="#7e7e7e" stroke="#fff" stroke-width="0.8"/><path d="M19.5 16.6V22.4M16.6 19.5H22.4" stroke="#fff" stroke-width="1.5"/></svg>
<svg style="left:995px;top:648px" width="17" height="17" viewBox="0 0 17 17"><rect x="1" y="2.5" width="15" height="13.5" rx="2.6" fill="none" stroke="#a8a8a8" stroke-width="1.1"/><path d="M1 6.8H16M4.5 0.8V3.6M12.5 0.8V3.6" stroke="#a8a8a8" stroke-width="1.1"/><path d="M5.8 11L7.3 12.3L11 9.4" fill="none" stroke="#a8a8a8" stroke-width="0.9"/></svg>
<svg style="left:1099px;top:650px" width="12" height="15" viewBox="0 0 12 15"><path d="M1 0.5V14" stroke="#9c9c9c" stroke-width="1.2"/><path d="M1 1.6H10.5L8 4.3L10.5 7.4H1" fill="none" stroke="#9c9c9c" stroke-width="1.1" stroke-linejoin="round"/></svg>
<svg style="left:366px;top:692px" width="5" height="8" viewBox="0 0 5 8"><path d="M0 0L5 3.6L0 7.2Z" fill="#b4bac4"/></svg>
<div class="a" style="left:379px;top:691px;width:8px;height:8px;background:#f9d700;border-radius:2px"></div>
<div class="t tn" style="left:401px;top:689px;letter-spacing:0.6px;color:#292d34">Produce Programme Plan/charter</div>
<div class="a" style="left:636px;top:687px;width:32px;height:19px;background:#fff;border:1px solid #e6e8ec;border-radius:4px"></div>
<svg style="left:642px;top:692px" width="10" height="11" viewBox="0 0 10 11"><path d="M2.2 3.6V6.3Q2.2 8.7 4.6 8.7H6.6" fill="none" stroke="#6b7380" stroke-width="1.1"/><circle cx="2.2" cy="2.2" r="1.5" fill="none" stroke="#6b7380" stroke-width="1.1"/><circle cx="8.1" cy="8.7" r="1.5" fill="none" stroke="#6b7380" stroke-width="1.1"/></svg>
<div class="t" style="left:656px;top:691px;font-size:12.5px;font-weight:bold;color:#707782;line-height:12px">7</div>
<svg style="left:674px;top:693px" width="11" height="5" viewBox="0 0 11 5"><g fill="#b6bbc3"><rect x="0" y="0" width="11" height="1.2"/><rect x="0" y="3" width="6" height="1.2"/></g></svg>
<svg style="left:890px;top:681px" width="27" height="27" viewBox="0 0 27 27"><circle cx="13" cy="13" r="12.5" fill="none" stroke="#a9a9a9" stroke-width="1" stroke-dasharray="2.2 2"/><circle cx="12.3" cy="9.5" r="2.8" fill="none" stroke="#8e8e8e" stroke-width="1.1"/><path d="M7.2 18.5Q7.3 13.6 12.3 13.3Q14.3 13.3 15.5 14.3" fill="none" stroke="#8e8e8e" stroke-width="1.1"/><circle cx="19.5" cy="19.5" r="5.6" fill="#7e7e7e" stroke="#fff" stroke-width="0.8"/><path d="M19.5 16.6V22.4M16.6 19.5H22.4" stroke="#fff" stroke-width="1.5"/></svg>
<svg style="left:995px;top:686px" width="17" height="17" viewBox="0 0 17 17"><rect x="1" y="2.5" width="15" height="13.5" rx="2.6" fill="none" stroke="#a8a8a8" stroke-width="1.1"/><path d="M1 6.8H16M4.5 0.8V3.6M12.5 0.8V3.6" stroke="#a8a8a8" stroke-width="1.1"/><path d="M5.8 11L7.3 12.3L11 9.4" fill="none" stroke="#a8a8a8" stroke-width="0.9"/></svg>
<svg style="left:1099px;top:688px" width="12" height="15" viewBox="0 0 12 15"><path d="M1 0.5V14" stroke="#9c9c9c" stroke-width="1.2"/><path d="M1 1.6H10.5L8 4.3L10.5 7.4H1" fill="none" stroke="#9c9c9c" stroke-width="1.1" stroke-linejoin="round"/></svg>
<div class="a" style="left:379px;top:729px;width:8px;height:8px;background:#f9d700;border-radius:2px"></div>
<div class="t tn" style="left:401px;top:727px;letter-spacing:0.14px;color:#292d34">Refine Business Case</div>
<svg style="left:550px;top:731px" width="11" height="7" viewBox="0 0 11 7"><g fill="#b6bbc3"><rect x="0" y="0" width="11" height="1.2"/><rect x="0" y="2.6" width="11" height="1.2"/><rect x="0" y="5.2" width="6.5" height="1.2"/></g></svg>
<svg style="left:890px;top:719px" width="27" height="27" viewBox="0 0 27 27"><circle cx="13" cy="13" r="12.5" fill="none" stroke="#a9a9a9" stroke-width="1" stroke-dasharray="2.2 2"/><circle cx="12.3" cy="9.5" r="2.8" fill="none" stroke="#8e8e8e" stroke-width="1.1"/><path d="M7.2 18.5Q7.3 13.6 12.3 13.3Q14.3 13.3 15.5 14.3" fill="none" stroke="#8e8e8e" stroke-width="1.1"/><circle cx="19.5" cy="19.5" r="5.6" fill="#7e7e7e" stroke="#fff" stroke-width="0.8"/><path d="M19.5 16.6V22.4M16.6 19.5H22.4" stroke="#fff" stroke-width="1.5"/></svg>
<svg style="left:995px;top:724px" width="17" height="17" viewBox="0 0 17 17"><rect x="1" y="2.5" width="15" height="13.5" rx="2.6" fill="none" stroke="#a8a8a8" stroke-width="1.1"/><path d="M1 6.8H16M4.5 0.8V3.6M12.5 0.8V3.6" stroke="#a8a8a8" stroke-width="1.1"/><path d="M5.8 11L7.3 12.3L11 9.4" fill="none" stroke="#a8a8a8" stroke-width="0.9"/></svg>
<svg style="left:1099px;top:726px" width="12" height="15" viewBox="0 0 12 15"><path d="M1 0.5V14" stroke="#9c9c9c" stroke-width="1.2"/><path d="M1 1.6H10.5L8 4.3L10.5 7.4H1" fill="none" stroke="#9c9c9c" stroke-width="1.1" stroke-linejoin="round"/></svg>
<div class="a" style="left:359px;top:752px;width:869px;height:38px;background:#f8f9fb"></div>
<div class="a" style="left:330px;top:763px;width:15px;height:15px;background:#fff;border:1px solid #e0e0e0;border-radius:50%"></div>
<svg style="left:348px;top:765px" width="7" height="14" viewBox="0 0 7 14"><g fill="#b4bac4"><rect x="0.5" y="0" width="2" height="2"/><rect x="4.5" y="0" width="2" height="2"/><rect x="0.5" y="3.7" width="2" height="2"/><rect x="4.5" y="3.7" width="2" height="2"/><rect x="0.5" y="7.3" width="2" height="2"/><rect x="4.5" y="7.3" width="2" height="2"/><rect x="0.5" y="11" width="2" height="2"/><rect x="4.5" y="11" width="2" height="2"/></g></svg>
<svg style="left:366px;top:768px" width="5" height="8" viewBox="0 0 5 8"><path d="M0 0L5 3.6L0 7.2Z" fill="#b4bac4"/></svg>
<div class="a" style="left:379px;top:767px;width:8px;height:8px;background:#f9d700;border-radius:2px"></div>
<div class="t tn" style="left:401px;top:765px;letter-spacing:0.4px;color:#e5383b">Define Governance</div>
<div class="a" style="left:537px;top:763px;width:32px;height:19px;background:#fff;border:1px solid #e6e8ec;border-radius:4px"></div>
<svg style="left:543px;top:768px" width="10" height="11" viewBox="0 0 10 11"><path d="M2.2 3.6V6.3Q2.2 8.7 4.6 8.7H6.6" fill="none" stroke="#6b7380" stroke-width="1.1"/><circle cx="2.2" cy="2.2" r="1.5" fill="none" stroke="#6b7380" stroke-width="1.1"/><circle cx="8.1" cy="8.7" r="1.5" fill="none" stroke="#6b7380" stroke-width="1.1"/></svg>
<div class="t" style="left:557px;top:767px;font-size:12.5px;font-weight:bold;color:#707782;line-height:12px">9</div>
<svg style="left:575px;top:769px" width="11" height="7" viewBox="0 0 11 7"><g fill="#b6bbc3"><rect x="0" y="0" width="11" height="1.2"/><rect x="0" y="2.6" width="11" height="1.2"/><rect x="0" y="5.2" width="6.5" height="1.2"/></g></svg>
<div class="a" style="left:592px;top:763px;width:20px;height:20px;background:#fff;border:1px solid #e6e8ec;border-radius:5px"></div>
<svg style="left:595px;top:766px" width="14" height="14" viewBox="0 0 14 14"><path d="M1.2 3.2Q1.2 1.2 3.2 1.2H6.2L12.6 7.6Q13.3 8.3 12.6 9L9 12.6Q8.3 13.3 7.6 12.6L1.2 6.2Z" fill="none" stroke="#9ea4ad" stroke-width="1"/><circle cx="4" cy="4" r="0.8" fill="#9ea4ad"/></svg>
<div class="a" style="left:616px;top:763px;width:20px;height:20px;background:#fff;border:1px solid #e6e8ec;border-radius:5px"></div>
<svg style="left:620px;top:767px" width="12" height="12" viewBox="0 0 12 12"><path d="M1.2 10.8L1.6 8.3L8.6 1.3Q9.3 0.6 10 1.3L10.7 2Q11.4 2.7 10.7 3.4L3.7 10.4Z" fill="none" stroke="#7f8590" stroke-width="1.1"/></svg>
<svg style="left:1196px;top:769px" width="16" height="4" viewBox="0 0 16 4"><circle cx="2" cy="2" r="1.8" fill="#6b7380"/><circle cx="8" cy="2" r="1.8" fill="#6b7380"/><circle cx="14" cy="2" r="1.8" fill="#6b7380"/></svg>
<svg style="left:890px;top:757px" width="27" height="27" viewBox="0 0 27 27"><circle cx="13" cy="13" r="12.5" fill="none" stroke="#a9a9a9" stroke-width="1" stroke-dasharray="2.2 2"/><circle cx="12.3" cy="9.5" r="2.8" fill="none" stroke="#8e8e8e" stroke-width="1.1"/><path d="M7.2 18.5Q7.3 13.6 12.3 13.3Q14.3 13.3 15.5 14.3" fill="none" stroke="#8e8e8e" stroke-width="1.1"/><circle cx="19.5" cy="19.5" r="5.6" fill="#7e7e7e" stroke="#fff" stroke-width="0.8"/><path d="M19.5 16.6V22.4M16.6 19.5H22.4" stroke="#fff" stroke-width="1.5"/></svg>
<svg style="left:995px;top:762px" width="17" height="17" viewBox="0 0 17 17"><rect x="1" y="2.5" width="15" height="13.5" rx="2.6" fill="none" stroke="#a8a8a8" stroke-width="1.1"/><path d="M1 6.8H16M4.5 0.8V3.6M12.5 0.8V3.6" stroke="#a8a8a8" stroke-width="1.1"/><path d="M5.8 11L7.3 12.3L11 9.4" fill="none" stroke="#a8a8a8" stroke-width="0.9"/></svg>
<svg style="left:1099px;top:764px" width="12" height="15" viewBox="0 0 12 15"><path d="M1 0.5V14" stroke="#9c9c9c" stroke-width="1.2"/><path d="M1 1.6H10.5L8 4.3L10.5 7.4H1" fill="none" stroke="#9c9c9c" stroke-width="1.1" stroke-linejoin="round"/></svg>
<svg style="left:366px;top:806px" width="5" height="8" viewBox="0 0 5 8"><path d="M0 0L5 3.6L0 7.2Z" fill="#b4bac4"/></svg>
<div class="a" style="left:379px;top:805px;width:8px;height:8px;background:#f9d700;border-radius:2px"></div>
<div class="t tn" style="left:401px;top:803px;letter-spacing:0.48px;color:#292d34">Formal Gateway Review</div>
<div class="a" style="left:572px;top:801px;width:32px;height:19px;background:#fff;border:1px solid #e6e8ec;border-radius:4px"></div>
<svg style="left:578px;top:806px" width="10" height="11" viewBox="0 0 10 11"><path d="M2.2 3.6V6.3Q2.2 8.7 4.6 8.7H6.6" fill="none" stroke="#6b7380" stroke-width="1.1"/><circle cx="2.2" cy="2.2" r="1.5" fill="none" stroke="#6b7380" stroke-width="1.1"/><circle cx="8.1" cy="8.7" r="1.5" fill="none" stroke="#6b7380" stroke-width="1.1"/></svg>
<div class="t" style="left:592px;top:805px;font-size:12.5px;font-weight:bold;color:#707782;line-height:12px">4</div>
<svg style="left:610px;top:807px" width="11" height="7" viewBox="0 0 11 7"><g fill="#b6bbc3"><rect x="0" y="0" width="11" height="1.2"/><rect x="0" y="2.6" width="11" height="1.2"/><rect x="0" y="5.2" width="6.5" height="1.2"/></g></svg>
<svg style="left:890px;top:795px" width="27" height="27" viewBox="0 0 27 27"><circle cx="13" cy="13" r="12.5" fill="none" stroke="#a9a9a9" stroke-width="1" stroke-dasharray="2.2 2"/><circle cx="12.3" cy="9.5" r="2.8" fill="none" stroke="#8e8e8e" stroke-width="1.1"/><path d="M7.2 18.5Q7.3 13.6 12.3 13.3Q14.3 13.3 15.5 14.3" fill="none" stroke="#8e8e8e" stroke-width="1.1"/><circle cx="19.5" cy="19.5" r="5.6" fill="#7e7e7e" stroke="#fff" stroke-width="0.8"/><path d="M19.5 16.6V22.4M16.6 19.5H22.4" stroke="#fff" stroke-width="1.5"/></svg>
<svg style="left:995px;top:800px" width="17" height="17" viewBox="0 0 17 17"><rect x="1" y="2.5" width="15" height="13.5" rx="2.6" fill="none" stroke="#a8a8a8" stroke-width="1.1"/><path d="M1 6.8H16M4.5 0.8V3.6M12.5 0.8V3.6" stroke="#a8a8a8" stroke-width="1.1"/><path d="M5.8 11L7.3 12.3L11 9.4" fill="none" stroke="#a8a8a8" stroke-width="0.9"/></svg>
<svg style="left:1099px;top:802px" width="12" height="15" viewBox="0 0 12 15"><path d="M1 0.5V14" stroke="#9c9c9c" stroke-width="1.2"/><path d="M1 1.6H10.5L8 4.3L10.5 7.4H1" fill="none" stroke="#9c9c9c" stroke-width="1.1" stroke-linejoin="round"/></svg>
<div class="t" style="left:375px;top:835px;font-size:12px;color:#8f96a0;line-height:12px">+ New task</div>
<!-- FAB -->
<div class="a" style="left:1162px;top:913px;width:62px;height:31px;background:#f42c2c;border-radius:9px;box-shadow:0 2px 7px rgba(244,44,44,0.4)"></div>
<svg style="left:1170px;top:924px" width="11" height="11" viewBox="0 0 11 11"><path d="M5.5 0.5V10.5M0.5 5.5H10.5" stroke="#fff" stroke-width="1.7"/></svg>
<div class="t" style="left:1189px;top:922px;font-size:13px;font-weight:bold;color:#fff;line-height:13px;letter-spacing:0.1px">Task</div>
<div class="a" style="left:1233px;top:914px;width:30px;height:30px;background:#fff;border-radius:9px;box-shadow:0 1px 5px rgba(0,0,0,0.10)"></div>
<svg style="left:1240px;top:921px" width="16" height="16" viewBox="0 0 16 16"><g stroke-width="1.3"><circle cx="4.5" cy="4.5" r="2.6" fill="#f35ba8"/><circle cx="11.5" cy="4.5" r="2.6" fill="#f4a535"/><circle cx="4.5" cy="11.5" r="2.6" fill="#35b37e"/><circle cx="11.5" cy="11.5" r="2.6" fill="#5c9cf5"/></g><g stroke="#fff" stroke-width="1"><path d="M4.5 3V6M3 4.5H6M11.5 3V6M10 4.5H13M4.5 10V13M3 11.5H6M11.5 10V13M10 11.5H13"/></g></svg>
<div class="a" style="left:1279px;top:72px;width:1px;height:888px;background:#000"></div>
<div class="a" style="left:0;top:959px;width:1280px;height:1px;background:#000"></div>
</body></html>
